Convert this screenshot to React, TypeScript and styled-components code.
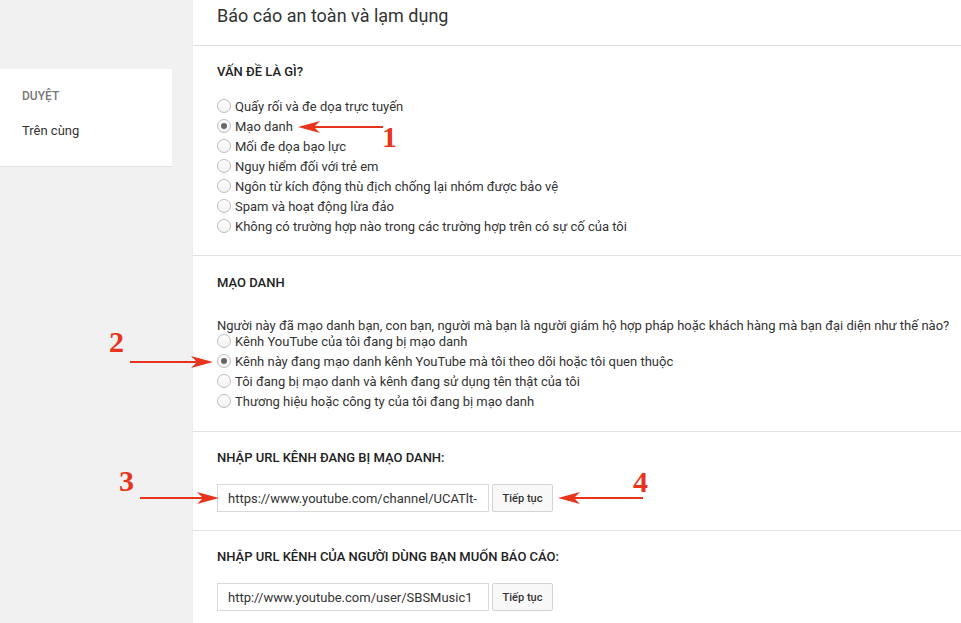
import React from "react";
import styled, { createGlobalStyle } from "styled-components";

const Global = createGlobalStyle`
  html, body { margin: 0; padding: 0; }
  body {
    background: #f1f1f1;
    font-family: Roboto, "Noto Sans", Arial, sans-serif;
    color: #333;
    -webkit-font-smoothing: antialiased;
  }
`;

const Page = styled.div`
  position: relative;
  display: flex;
  width: 961px;
  height: 623px;
  overflow: hidden;
  background: #f1f1f1;
`;

const Side = styled.aside`
  width: 192px;
  flex: none;
  padding-top: 69px;
  box-sizing: border-box;
`;

const SideCard = styled.nav`
  width: 172px;
  height: 97px;
  background: #fff;
  box-shadow: 0 1px 1px rgba(0, 0, 0, 0.06);
  box-sizing: border-box;
  padding: 19px 0 0 22px;
  display: flex;
  flex-direction: column;
  gap: 19px;
`;

const SideLabel = styled.div`
  font-size: 12px;
  font-weight: 500;
  color: #777;
  line-height: 16px;
`;

const SideLink = styled.div`
  font-size: 13px;
  color: #333;
  line-height: 16px;
`;

const Main = styled.main`
  flex: 1;
  background: #fff;
  border-left: 1px solid #ececec;
  min-width: 0;
`;

const Header = styled.header`
  height: 46px;
  box-sizing: border-box;
  padding: 5px 0 0 24px;
  border-bottom: 1px solid #dedede;
`;

const Title = styled.h1`
  margin: 0;
  font-size: 18px;
  font-weight: 400;
  line-height: 22px;
  color: #333;
`;

const Section = styled.section<{ $pt: number; $pb: number }>`
  padding: ${(p) => p.$pt}px 24px ${(p) => p.$pb}px;
  border-bottom: 1px solid #e2e2e2;
  display: flex;
  flex-direction: column;
  align-items: flex-start;
`;

const Heading = styled.h2<{ $mb: number }>`
  margin: 0 0 ${(p) => p.$mb}px;
  font-size: 13px;
  font-weight: 500;
  line-height: 16px;
  color: #222;
  text-transform: uppercase;
  white-space: nowrap;
`;

const Question = styled.p`
  margin: 0;
  font-size: 13px;
  line-height: 15px;
  color: #333;
  white-space: nowrap;
`;

const RadioList = styled.div<{ $mt?: number }>`
  display: flex;
  flex-direction: column;
  margin-top: ${(p) => p.$mt ?? 0}px;
`;

const RadioRow = styled.label`
  display: flex;
  align-items: center;
  gap: 4px;
  height: 20px;
  font-size: 13px;
  color: #333;
  white-space: nowrap;
`;

const Circle = styled.span<{ $on?: boolean }>`
  position: relative;
  width: 14px;
  height: 14px;
  box-sizing: border-box;
  border-radius: 50%;
  border: 1px solid #bdbdbd;
  background: linear-gradient(#ffffff, #f1f1f1);
  flex: none;
  &::after {
    content: "";
    display: ${(p) => (p.$on ? "block" : "none")};
    position: absolute;
    left: 3px;
    top: 3px;
    width: 6px;
    height: 6px;
    border-radius: 50%;
    background: #666;
  }
`;

const InputRow = styled.div`
  display: flex;
  gap: 3px;
  align-items: center;
`;

const UrlInput = styled.div`
  width: 272px;
  height: 28px;
  box-sizing: border-box;
  border: 1px solid #d9d9d9;
  padding: 0 10px;
  display: flex;
  align-items: center;
  font-size: 13px;
  color: #333;
  white-space: nowrap;
  overflow: hidden;
`;

const Button = styled.button`
  height: 28px;
  width: 61px;
  box-sizing: border-box;
  border: 1px solid #d3d3d3;
  border-radius: 2px;
  background: #f8f8f8;
  font-family: inherit;
  font-size: 11px;
  font-weight: 500;
  color: #333;
  padding: 0;
`;

const Overlay = styled.svg`
  position: absolute;
  left: 0;
  top: 0;
  pointer-events: none;
`;

const Num = styled.span<{ $x: number; $y: number }>`
  position: absolute;
  left: ${(p) => p.$x}px;
  top: ${(p) => p.$y}px;
  font-family: "Liberation Serif", "Times New Roman", serif;
  font-weight: 700;
  font-size: 30px;
  line-height: 30px;
  color: #e8341c;
`;

const RED = "#e8341c";

function Arrow({ tip, tail, y }: { tip: number; tail: number; y: number }) {
  const dir = tail > tip ? 1 : -1;
  const back = tip + dir * 22;
  const notch = tip + dir * 16;
  return (
    <g>
      <line x1={notch} y1={y} x2={tail} y2={y} stroke={RED} strokeWidth={2} />
      <polygon
        points={`${tip},${y} ${back},${y - 6} ${notch},${y} ${back},${y + 6}`}
        fill={RED}
      />
    </g>
  );
}

const problems = [
  "Quấy rối và đe dọa trực tuyến",
  "Mạo danh",
  "Mối đe dọa bạo lực",
  "Nguy hiểm đối với trẻ em",
  "Ngôn từ kích động thù địch chống lại nhóm được bảo vệ",
  "Spam và hoạt động lừa đảo",
  "Không có trường hợp nào trong các trường hợp trên có sự cố của tôi",
];

const impersonation = [
  "Kênh YouTube của tôi đang bị mạo danh",
  "Kênh này đang mạo danh kênh YouTube mà tôi theo dõi hoặc tôi quen thuộc",
  "Tôi đang bị mạo danh và kênh đang sử dụng tên thật của tôi",
  "Thương hiệu hoặc công ty của tôi đang bị mạo danh",
];

export default function App() {
  return (
    <>
      <Global />
      <Page>
        <Side>
          <SideCard>
            <SideLabel>DUYỆT</SideLabel>
            <SideLink>Trên cùng</SideLink>
          </SideCard>
        </Side>
        <Main>
          <Header>
            <Title>Báo cáo an toàn và lạm dụng</Title>
          </Header>
          <Section $pt={18} $pb={19}>
            <Heading $mb={16}>Vấn đề là gì?</Heading>
            <RadioList>
              {problems.map((t, i) => (
                <RadioRow key={t}>
                  <Circle $on={i === 1} />
                  {t}
                </RadioRow>
              ))}
            </RadioList>
          </Section>
          <Section $pt={19} $pb={20}>
            <Heading $mb={27}>Mạo danh</Heading>
            <Question>
              Người này đã mạo danh bạn, con bạn, người mà bạn là người giám hộ hợp pháp hoặc khách hàng mà bạn đại diện như thế nào?
            </Question>
            <RadioList $mt={-2}>
              {impersonation.map((t, i) => (
                <RadioRow key={t}>
                  <Circle $on={i === 1} />
                  {t}
                </RadioRow>
              ))}
            </RadioList>
          </Section>
          <Section $pt={18} $pb={18}>
            <Heading $mb={18}>Nhập URL kênh đang bị mạo danh:</Heading>
            <InputRow>
              <UrlInput>https://www.youtube.com/channel/UCATlt-</UrlInput>
              <Button>Tiếp tục</Button>
            </InputRow>
          </Section>
          <Section $pt={18} $pb={19}>
            <Heading $mb={18}>Nhập URL kênh của người dùng bạn muốn báo cáo:</Heading>
            <InputRow>
              <UrlInput>http://www.youtube.com/user/SBSMusic1</UrlInput>
              <Button>Tiếp tục</Button>
            </InputRow>
          </Section>
        </Main>
        <Overlay width={961} height={623} viewBox="0 0 961 623">
          <Arrow tip={298} tail={383} y={127} />
          <Arrow tip={213} tail={130} y={362} />
          <Arrow tip={219} tail={140} y={498} />
          <Arrow tip={558} tail={643} y={498} />
        </Overlay>
        <Num $x={382} $y={122}>1</Num>
        <Num $x={109} $y={327}>2</Num>
        <Num $x={119} $y={466}>3</Num>
        <Num $x={633} $y={467}>4</Num>
      </Page>
    </>
  );
}
